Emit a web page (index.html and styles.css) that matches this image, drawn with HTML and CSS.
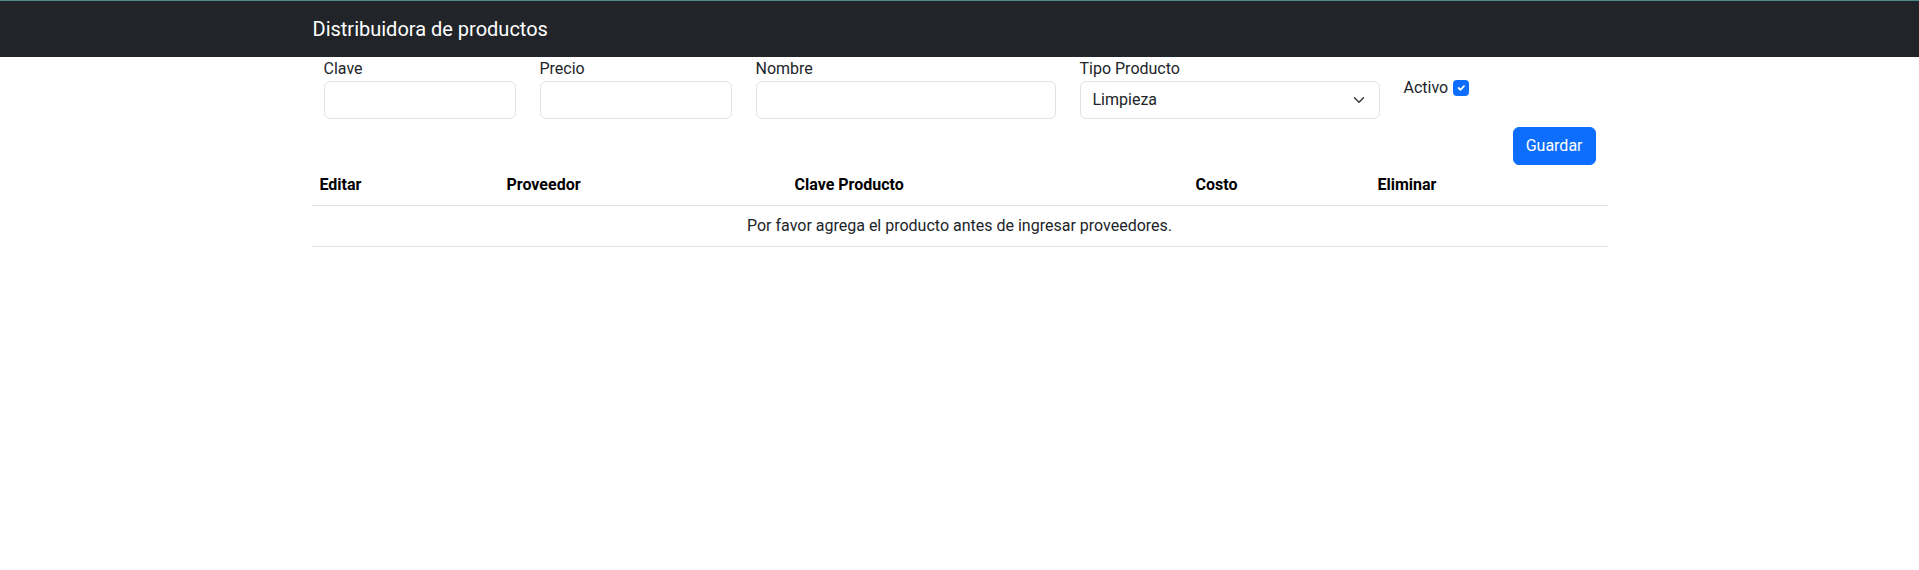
FILE: index.html
```html
<!DOCTYPE html>
<html lang="es">
<head>
<meta charset="utf-8">
<title>Distribuidora de productos</title>
<link rel="stylesheet" href="styles.css">
</head>
<body>
<nav class="navbar">
  <div class="container">
    <span class="brand">Distribuidora de productos</span>
  </div>
</nav>
<main class="container">
  <form class="form-row">
    <div class="col col-2">
      <label class="form-label">Clave</label>
      <input class="form-control" type="text">
    </div>
    <div class="col col-2">
      <label class="form-label">Precio</label>
      <input class="form-control" type="text">
    </div>
    <div class="col col-3">
      <label class="form-label">Nombre</label>
      <input class="form-control" type="text">
    </div>
    <div class="col col-3">
      <label class="form-label">Tipo Producto</label>
      <div class="form-select">
        <span>Limpieza</span>
        <svg class="chevron" width="16" height="12" viewBox="0 0 16 16"><path fill="none" stroke="#343a40" stroke-linecap="round" stroke-linejoin="round" stroke-width="2" d="m2 5 6 6 6-6"/></svg>
      </div>
    </div>
    <div class="col col-check">
      <div class="form-check">
        <span class="check-label">Activo</span>
        <span class="check-box"><svg width="12" height="12" viewBox="0 0 20 20"><path fill="none" stroke="#fff" stroke-linecap="round" stroke-linejoin="round" stroke-width="3" d="m6 10 3 3 6-6"/></svg></span>
      </div>
    </div>
  </form>
  <div class="actions">
    <button class="btn" type="button">Guardar</button>
  </div>
  <table class="table">
    <thead>
      <tr>
        <th class="c-editar">Editar</th>
        <th class="c-prov">Proveedor</th>
        <th class="c-clave">Clave Producto</th>
        <th class="c-costo">Costo</th>
        <th class="c-elim">Eliminar</th>
      </tr>
    </thead>
    <tbody>
      <tr>
        <td colspan="5" class="empty">Por favor agrega el producto antes de ingresar proveedores.</td>
      </tr>
    </tbody>
  </table>
</main>
</body>
</html>
```
FILE: styles.css
```css
* { box-sizing: border-box; }
html, body { margin: 0; padding: 0; }
body {
  font-family: Roboto, "Liberation Sans", sans-serif;
  font-size: 16px;
  line-height: 24px;
  color: #212529;
  background: #fff;
}
.container {
  width: 1320px;
  margin: 0 auto;
  padding: 0 12px;
}
.navbar {
  background: #212529;
  border-top: 1px solid #4c8a88;
  height: 57px;
}
.navbar .container {
  height: 56px;
  display: flex;
  align-items: center;
}
.brand {
  color: #fff;
  font-size: 20px;
  line-height: 30px;
  padding-left: 1px;
}
.form-row {
  display: flex;
  margin: 0;
}
.col { padding: 0 12px; }
.col-2 { width: 216px; }
.col-3 { width: 324px; }
.col-check { flex: 1; padding-top: 19px; }
.form-label {
  display: block;
  height: 24px;
  line-height: 24px;
  color: #212529;
}
.form-control, .form-select {
  display: block;
  width: 100%;
  height: 38px;
  border: 1px solid #dee2e6;
  border-radius: 6px;
  background: #fff;
  font: inherit;
  padding: 6px 12px;
  outline: none;
}
.form-select {
  display: flex;
  align-items: center;
  justify-content: space-between;
  padding: 6px 12px 6px 12px;
}
.chevron { display: block; }
.form-check {
  display: flex;
  align-items: center;
  height: 24px;
}
.check-label { margin-right: 5px; }
.check-box {
  width: 16px;
  height: 16px;
  border-radius: 4px;
  background: #0d6efd;
  display: flex;
  align-items: center;
  justify-content: center;
}
.actions {
  display: flex;
  justify-content: flex-end;
  padding: 8px 12px 0 0;
}
.btn {
  height: 38px;
  padding: 6px 12px;
  border: 1px solid #0d6efd;
  background: #0d6efd;
  color: #fff;
  border-radius: 6px;
  font: inherit;
}
.table {
  width: 100%;
  border-collapse: collapse;
  table-layout: fixed;
  margin-bottom: 16px;
}
.table th, .table td {
  padding: 8px;
  border-bottom: 1px solid #dee2e6;
  text-align: left;
  line-height: 24px;
}
.table th { font-weight: 700; color: #000; }
.c-editar { width: 187px; }
.c-prov { width: 288px; }
.c-clave { width: 401px; }
.c-costo { width: 182px; }
.c-elim { width: 238px; }
.table td.empty { text-align: center; }
```
